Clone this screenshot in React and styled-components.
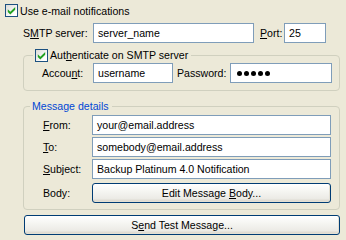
import React from 'react';
import styled, { createGlobalStyle } from 'styled-components';

const FONT = '"Liberation Sans", Arial, sans-serif';

const Global = createGlobalStyle`
  html, body { margin: 0; padding: 0; background: #ECE9D8; }
  #root { width: 346px; height: 240px; }
`;

const Page = styled.div`
  width: 346px;
  height: 240px;
  box-sizing: border-box;
  padding: 4px 6px 0 5px;
  background: #ECE9D8;
  color: #000;
  font-family: ${FONT};
  font-size: 10.6px;
  display: flex;
  flex-direction: column;
`;

const CheckRow = styled.label`
  display: flex;
  align-items: center;
  gap: 2px;
  height: 13px;
  white-space: nowrap;
`;

const Box = styled.span`
  width: 13px;
  height: 13px;
  box-sizing: border-box;
  border: 1px solid #1C5180;
  background: linear-gradient(135deg, #DCDCD7 0%, #FFFFFF 80%);
  display: inline-flex;
  align-items: center;
  justify-content: center;
  flex: none;
`;

const Check = () => (
  <Box>
    <svg width="11" height="11" viewBox="0 0 11 11">
      <path d="M1.8 4.3 L4.3 6.8 L9.2 1.9 L9.2 4.7 L4.3 9.6 L1.8 7.1 Z" fill="#21A121" />
    </svg>
  </Box>
);

const U = styled.span`
  text-decoration: underline;
  text-underline-offset: 1px;
`;

const ServerRow = styled.div`
  margin: 6px 0 0 18px;
  display: grid;
  grid-template-columns: 70px 161px 30px 42px;
  align-items: center;
  & > :nth-child(3) { margin-left: 6px; }
`;

const Label = styled.span`
  white-space: nowrap;
`;

const Field = styled.div`
  box-sizing: border-box;
  height: 20px;
  display: flex;
  align-items: center;
  border: 1px solid #7F9DB9;
  background: #fff;
  padding: 0 4px;
  white-space: nowrap;
  overflow: hidden;
`;

const Dots = styled.span`
  display: flex;
  gap: 2px;
  padding-left: 2px;
`;

const Dot = styled.span`
  width: 5px;
  height: 5px;
  border-radius: 50%;
  background: #000;
`;

const Group = styled.fieldset`
  margin: ${p => p.$mt || 0}px 0 0 18px;
  padding: ${p => p.$pad};
  border: 1px solid #D0D0BF;
  border-radius: 4px;
  min-width: 0;
`;

const Legend = styled.legend`
  padding: 0 3px 0 2px;
  margin-left: ${p => p.$ml || 0}px;
  color: ${p => p.$color || '#000'};
  height: 13px;
  line-height: 13px;
`;

const AuthRow = styled.div`
  display: grid;
  grid-template-columns: 51px 80px 57px 102px;
  align-items: center;
  & > :nth-child(3) { margin-left: 4px; }
`;

const DetailGrid = styled.div`
  display: grid;
  grid-template-columns: 49px 239px;
  row-gap: 2px;
  align-items: center;
  & > :nth-child(7), & > :nth-child(8) { margin-top: 2px; }
`;

const Button = styled.button`
  box-sizing: border-box;
  height: 20px;
  width: 100%;
  margin: 0;
  padding: 0;
  border: 1px solid #003C74;
  border-radius: 3px;
  background: linear-gradient(180deg, #FFFFFF 0%, #F4F4F0 45%, #ECEBE6 80%, #D6D0C5 100%);
  font-family: ${FONT};
  font-size: 10.6px;
  color: #000;
  box-shadow: inset -1px -1px 0 #E3E0D4;
`;

const SendWrap = styled.div`
  margin: 5px 0 0 19px;
`;

export default function App() {
  return (
    <>
      <Global />
      <Page>
        <CheckRow>
          <Check />
          <span>Use e-mail notifications</span>
        </CheckRow>

        <ServerRow>
          <Label>S<U>M</U>TP server:</Label>
          <Field>server_name</Field>
          <Label><U>P</U>ort:</Label>
          <Field>25</Field>
        </ServerRow>

        <Group $mt={6} $pad="1px 7px 7px 18px">
          <Legend $ml={-9}>
            <CheckRow as="span">
              <Check />
              <span>Aut<U>h</U>enticate on SMTP server</span>
            </CheckRow>
          </Legend>
          <AuthRow>
            <Label>Accou<U>n</U>t:</Label>
            <Field>username</Field>
            <Label>Password:</Label>
            <Field aria-label="password">
              <Dots>
                {[0, 1, 2, 3, 4].map(i => <Dot key={i} />)}
              </Dots>
            </Field>
          </AuthRow>
        </Group>

        <Group $mt={9} $pad="2px 7px 6px 19px">
          <Legend $ml={-13} $color="#0046D5">Message details</Legend>
          <DetailGrid>
            <Label><U>F</U>rom:</Label>
            <Field>your@email.address</Field>
            <Label><U>T</U>o:</Label>
            <Field>somebody@email.address</Field>
            <Label><U>S</U>ubject:</Label>
            <Field>Backup Platinum 4.0 Notification</Field>
            <Label>Body:</Label>
            <Button>Edit Message <U>B</U>ody...</Button>
          </DetailGrid>
        </Group>

        <SendWrap>
          <Button>S<U>e</U>nd Test Message...</Button>
        </SendWrap>
      </Page>
    </>
  );
}
